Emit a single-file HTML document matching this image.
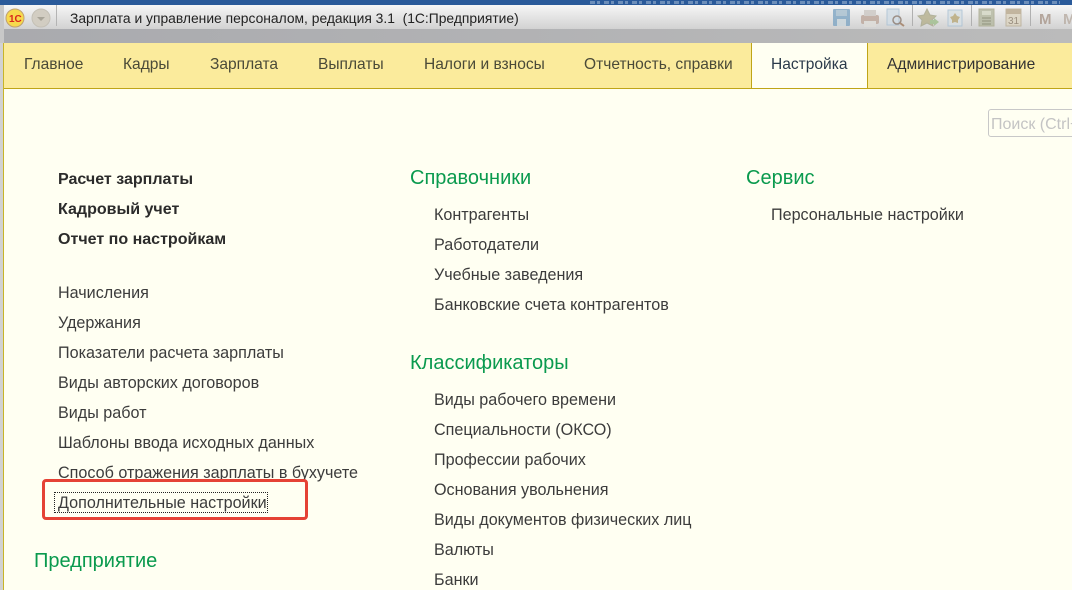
<!DOCTYPE html>
<html><head><meta charset="utf-8">
<style>
html,body{margin:0;padding:0}
body{width:1072px;height:590px;overflow:hidden;position:relative;background:#fffff2;font-family:"Liberation Sans",sans-serif;color:#333;}
.a{position:absolute;white-space:nowrap;line-height:18px}
.t{font-size:15.55px;color:#4a4a38}
.l{font-size:16.15px;color:#3c3c3c}
.b{font-size:16.05px;font-weight:bold;color:#2b2b2b}
.h{font-size:20px;color:#0a9a4e;line-height:24px}
.box{position:absolute}
</style></head><body>
<div class="box" style="left:0;top:0;width:1072px;height:5px;background:#2a5a9a"></div>
<div class="box" style="left:590px;top:1px;width:470px;height:3px;opacity:.35;background:repeating-linear-gradient(90deg,#e8eef6 0 5px,#2a5a9a 5px 7px,#e8eef6 7px 10px,#2a5a9a 10px 14px)"></div>
<div class="box" style="left:0;top:5px;width:1072px;height:24px;background:linear-gradient(#f6f6f6,#d2d2d2)"></div>
<div class="box" style="left:0;top:29px;width:1072px;height:14px;background:linear-gradient(90deg,#a9aaae,#bbbbbb)"></div>
<div class="box" style="left:0;top:5px;width:4px;height:38px;background:#c8c8c8"></div>
<svg class="box" style="left:0;top:0" width="1072" height="43">
<circle cx="15" cy="18" r="9" fill="#f7d94c" stroke="#c0a070"/>
<text x="9" y="22" font-family="Liberation Sans" font-size="10" font-weight="bold" fill="#d8261c">1С</text>
<circle cx="41" cy="18" r="9" fill="#d2cdc2" stroke="#c4c0b6"/>
<path d="M37 17h8l-4 4z" fill="#a8a498"/>
<path d="M56.500 5v21" stroke="#b4b4b4"/>
<g opacity=".8">
<rect x="833" y="9" width="17" height="17" rx="1" fill="#7fa6c4"/><rect x="837" y="19" width="9" height="7" fill="#c9d6dc"/><rect x="836" y="10" width="11" height="6" fill="#a8c0d0"/>
<rect x="861" y="15" width="18" height="9" rx="2" fill="#bda79b"/><rect x="864" y="10" width="12" height="6" fill="#ccc8c4"/><rect x="864" y="21" width="12" height="6" fill="#dedcd8"/>
<rect x="887" y="9" width="12" height="16" fill="#d2dde6" stroke="#a8c0d4"/><circle cx="897" cy="20" r="4" fill="none" stroke="#8a7a70" stroke-width="1.500"/><path d="M900 23l4 3" stroke="#a07c60" stroke-width="2"/>
<path d="M927 9l3 6 6 1-4 4 1 6-6-3-6 3 1-6-4-4 6-1z" fill="#b5b08c" stroke="#a6a68a"/><path d="M930 20h4v-2l5 4-5 4v-2h-4z" fill="#9fbe8c"/>
<rect x="948" y="10" width="14" height="16" fill="#d8e0e4" stroke="#a8c0d4"/><path d="M955 13l2 3 3 1-2 3v3l-3-1-3 1v-3l-2-3 3-1z" fill="#b8a878"/>
<rect x="979" y="9" width="15" height="17" fill="#b4b8a0" stroke="#a8a88c"/><rect x="982" y="11" width="9" height="4" fill="#d4d8c4"/><path d="M982 18h9M982 21h9M982 24h9" stroke="#8f9278" stroke-width="1.500"/>
<rect x="1006" y="9" width="15" height="17" fill="#dcd4c0" stroke="#b8ac94"/><rect x="1006" y="9" width="15" height="5" fill="#b8a88c"/>
<text x="1008" y="24" font-family="Liberation Sans" font-size="10" fill="#8a7c68">31</text>
<text x="1039" y="24" font-family="Liberation Sans" font-size="15" font-weight="bold" fill="#a8968a">M</text>
<text x="1063" y="24" font-family="Liberation Sans" font-size="15" font-weight="bold" fill="#b8aca2">M</text>
</g>
<path d="M912.500 5v21M971.500 5v21M1030.500 5v21" stroke="#b0b0b0"/>
</svg>
<div class="a" style="left:70px;top:9px;font-size:13.85px;color:#222">Зарплата и управление персоналом, редакция 3.1&nbsp; (1С:Предприятие)</div>
<div class="box" style="left:4px;top:43px;width:1068px;height:45px;background:#fbeb9c;border-bottom:1px solid #bfa517"></div>
<div class="box" style="left:3px;top:43px;width:1px;height:547px;background:#c8b428"></div>
<div class="box" style="left:0;top:43px;width:3px;height:547px;background:#d2d2d2"></div>
<div class="box" style="left:751px;top:43px;width:115px;height:45px;background:#fffff2;border-left:1px solid #bfa517;border-right:1px solid #bfa517"></div>
<div class="a t" style="left:24px;top:56px">Главное</div>
<div class="a t" style="left:123px;top:56px">Кадры</div>
<div class="a t" style="left:210px;top:56px">Зарплата</div>
<div class="a t" style="left:318px;top:56px">Выплаты</div>
<div class="a t" style="left:424px;top:56px">Налоги и взносы</div>
<div class="a t" style="left:584px;top:56px">Отчетность, справки</div>
<div class="a t" style="left:771px;top:56px;color:#2b3a4a">Настройка</div>
<div class="a t" style="left:887px;top:56px;color:#333">Администрирование</div>
<div class="box" style="left:988px;top:109px;width:90px;height:28px;box-sizing:border-box;border:1px solid #c8c8c8;border-radius:3px;background:#fffff2"></div>
<div class="a" style="left:991px;top:116px;font-size:16px;color:#c4c4c4">Поиск (Ctrl+F)</div>
<div class="a b" style="left:58px;top:170px">Расчет зарплаты</div>
<div class="a b" style="left:58px;top:200px">Кадровый учет</div>
<div class="a b" style="left:58px;top:230px">Отчет по настройкам</div>
<div class="a l" style="left:58px;top:284px">Начисления</div>
<div class="a l" style="left:58px;top:314px">Удержания</div>
<div class="a l" style="left:58px;top:344px">Показатели расчета зарплаты</div>
<div class="a l" style="left:58px;top:374px">Виды авторских договоров</div>
<div class="a l" style="left:58px;top:404px">Виды работ</div>
<div class="a l" style="left:58px;top:434px">Шаблоны ввода исходных данных</div>
<div class="a l" style="left:58px;top:464px">Способ отражения зарплаты в бухучете</div>
<div class="a l" style="left:58px;top:494px">Дополнительные настройки</div>
<div class="box" style="left:54px;top:492px;width:212px;height:19px;border:1px dotted #222"></div>
<div class="box" style="left:42px;top:479px;width:260px;height:35px;border:3px solid #e54235;border-radius:4px"></div>
<div class="a h" style="left:34px;top:549px">Предприятие</div>
<div class="a h" style="left:410px;top:166px">Справочники</div>
<div class="a l" style="left:434px;top:206px">Контрагенты</div>
<div class="a l" style="left:434px;top:236px">Работодатели</div>
<div class="a l" style="left:434px;top:266px">Учебные заведения</div>
<div class="a l" style="left:434px;top:296px">Банковские счета контрагентов</div>
<div class="a h" style="left:410px;top:351px">Классификаторы</div>
<div class="a l" style="left:434px;top:391px">Виды рабочего времени</div>
<div class="a l" style="left:434px;top:421px">Специальности (ОКСО)</div>
<div class="a l" style="left:434px;top:451px">Профессии рабочих</div>
<div class="a l" style="left:434px;top:481px">Основания увольнения</div>
<div class="a l" style="left:434px;top:511px">Виды документов физических лиц</div>
<div class="a l" style="left:434px;top:541px">Валюты</div>
<div class="a l" style="left:434px;top:571px">Банки</div>
<div class="a h" style="left:746px;top:166px">Сервис</div>
<div class="a l" style="left:771px;top:206px">Персональные настройки</div>
</body></html>
